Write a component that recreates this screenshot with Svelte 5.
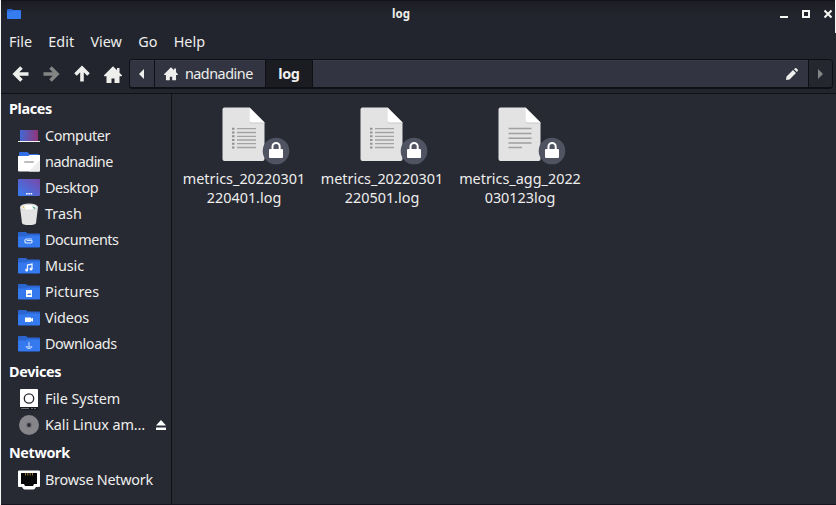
<script>
  const places = [
    { name: 'Computer', icon: 'computer', spacing: -0.4 },
    { name: 'nadnadine', icon: 'user', spacing: -0.5 },
    { name: 'Desktop', icon: 'desktop', spacing: -0.4 },
    { name: 'Trash', icon: 'trash', spacing: 0 },
    { name: 'Documents', icon: 'documents', spacing: -0.45 },
    { name: 'Music', icon: 'music', spacing: -0.1 },
    { name: 'Pictures', icon: 'pictures', spacing: 0 },
    { name: 'Videos', icon: 'videos', spacing: -0.15 },
    { name: 'Downloads', icon: 'downloads', spacing: -0.4 }
  ];
  const devices = [
    { name: 'File System', icon: 'drive', spacing: -0.05 },
    { name: 'Kali Linux am…', icon: 'disc', spacing: -0.1, eject: true }
  ];
  const network = [{ name: 'Browse Network', icon: 'network', spacing: -0.25 }];
  const groups = [
    { title: 'Places', items: places },
    { title: 'Devices', items: devices },
    { title: 'Network', items: network }
  ];
  const files = [
    { lines: ['metrics_20220301', '220401.log'], list: true },
    { lines: ['metrics_20220301', '220501.log'], list: true },
    { lines: ['metrics_agg_2022', '030123log'], list: false }
  ];
  const menus = ['File', 'Edit', 'View', 'Go', 'Help'];
</script>

{#snippet house()}
  <svg class="house" viewBox="0 0 18 17"><path d="M9 .3 0 9.300q-.2.900.7.900h1.800V17h5v-4.500h3V17h5v-6.800h1.800q.9 0 .7-.9L15.500 6.700V2h-2.500v2.300z" /></svg>
{/snippet}

{#snippet sideIcon(kind)}
  <svg class="side-icon" viewBox="0 0 22 22">
    {#if kind === 'computer'}
      <rect x="2" y="5" width="18" height="11" fill="url(#screen)" />
      <path d="M0 16.500h22" stroke="#f4f4f6" />
    {:else if kind === 'user'}
      <path d="M1 8V2.200Q1 1 2.200 1h7.500l1.500 2H20q1 0 1 1v4z" fill="#3170e4" />
      <path d="M0 5h10l2-1h10v15.500q0 1-1 1H1q-1 0-1-1z" fill="#fff" />
      <path d="M22 9v10.500q0 1-1 1H11z" fill="#ededed" />
      <path d="M7 11h8" stroke="#bdbdbd" stroke-width="2" stroke-linecap="round" />
    {:else if kind === 'desktop'}
      <rect x="0" y="2" width="22" height="17" rx="1" fill="url(#desk)" />
      <path d="M8 16.700h1.600m.7 0h1.600m.7 0h1.600" stroke="#fff" stroke-width="1.500" />
    {:else if kind === 'trash'}
      <path d="M2 4 4 20q.3 2 7 2t7-2l2-16z" fill="#e3e3e3" />
      <ellipse cx="11" cy="4" rx="9" ry="3.500" fill="#d8d8d8" />
      <ellipse cx="11" cy="4.300" rx="7.600" ry="2.500" fill="#fff" />
      <path d="m4 4 2-1 1 3z" fill="#e4c36e" /><path d="m14 3 4 2-2 1z" fill="#47a58d" />
    {:else if kind === 'drive'}
      <rect x="2" y="1" width="18" height="19" rx="1" fill="#fff" />
      <path d="M2 19h18v2q0 1-1 1H3q-1 0-1-1z" fill="#191a20" />
      <path d="M3 20.500h8m2 0h2m1 0h2" stroke="#74757a" />
      <circle cx="11" cy="10.500" r="4.700" fill="#fff" stroke="#25262c" stroke-width="1.300" />
    {:else if kind === 'disc'}
      <circle cx="11" cy="11" r="10" fill="#85858a" />
      <circle cx="11" cy="11" r="3.200" fill="#77787e" />
      <circle cx="11" cy="11" r="1.900" fill="#292a35" />
    {:else if kind === 'network'}
      <path d="M1.200 1.500h19.600q1.200 0 1.200 1.200V17q0 1-1 1h-3l-1 1.500q-.4 1-2 1H7q-1.500 0-2-1L4 18H1q-1 0-1-1V2.700Q0 1.500 1.200 1.500z" fill="#fff" />
      <path d="M3 4h16v11h-3l-1 2H7l-1-2H3z" fill="#08080a" />
      <path d="M7.500 4v2.500m2.300-2.500v2.500m2.400-2.500v2.500m2.300-2.500v2.500" stroke="#8c7539" />
    {:else}
      <path d="M0 15V4q0-1 1-1h6.500q.8 0 1.500.7l.7.800H21q1 0 1 1V15z" fill="#2a65d0" />
      <path d="M0 7.500h8l1.500-1H22V17.500q0 1-1 1H1q-1 0-1-1z" fill="#3579ef" />
      <path d="M.5 18.500h21" stroke="#2a4f9c" stroke-width=".7" />
      {#if kind === 'documents'}
        <path d="M14.800 10.800H9.500a2 2 0 0 0 0 4h3.700a1.700 1.700 0 0 0 1.700-1.700q0-.8-.9-.8H9.300" transform="translate(-.7 -.8)" fill="none" stroke="#d9e6ff" stroke-width="1.100" />
      {:else if kind === 'music'}
        <path d="M9.500 15v-5l4.500-1V14" fill="none" stroke="#eef4ff" stroke-width="1.300" />
        <circle cx="8.700" cy="15" r="1.500" fill="#eef4ff" /><circle cx="13" cy="14" r="1.500" fill="#eef4ff" />
      {:else if kind === 'pictures'}
        <rect x="8" y="9" width="6" height="7" fill="#fff" /><path d="m9 14 1.300-1.500.8.500 1-1L13.300 14z" fill="#3579ef" />
      {:else if kind === 'videos'}
        <path d="M7 10.500h6v1.300l2-1v4l-2-1V15H7z" fill="#fff" />
      {:else}
        <path d="M11 9v5.500m-1.500-1.500 1.500 1.500 1.500-1.500M8 13q.2 2.500 3 2.500T14 13" fill="none" stroke="#c9dcff" stroke-width="1" />
      {/if}
    {/if}
  </svg>
{/snippet}

<main class="window">
  <svg class="defs" width="0" height="0">
    <linearGradient id="screen" x1="0" x2="1"><stop stop-color="#4169d5" /><stop offset="1" stop-color="#913578" /></linearGradient>
    <linearGradient id="desk" x1="0" y1="1" x2="1" y2="0"><stop stop-color="#367df2" /><stop offset="1" stop-color="#7947a9" /></linearGradient>
  </svg>
  <div class="edge"></div>
  <header class="titlebar">
    <svg class="app-icon" viewBox="0 0 14 10"><path d="M0 1q0-1 1-1h4l1 1h7q1 0 1 1v7q0 1-1 1H1q-1 0-1-1z" fill="#2967d5" /><path d="M0 2.500h5l1-1h8V9q0 1-1 1H1q-1 0-1-1z" fill="#367cf1" /></svg>
    <h1>log</h1>
    <svg class="controls" viewBox="0 0 53 10"><path d="M0 8h8" stroke-width="2" /><path d="M23 2h6v6h-6z" fill="none" stroke-width="2" /><path d="m44.500 1.500 7 7m0-7-7 7" stroke-width="2" /></svg>
  </header>
  <nav class="menubar">
    {#each menus as menu}<span>{menu}</span>{/each}
  </nav>
  <div class="toolbar">
    <svg class="arrow" viewBox="0 0 16 16"><path d="M8.500 1.500 2 8l6.500 6.500M2.500 8H15.500" /></svg>
    <svg class="arrow dim" viewBox="0 0 16 16"><path d="M7.500 1.500 14 8l-6.500 6.500M13.500 8H.5" /></svg>
    <svg class="arrow" viewBox="0 0 16 16"><path d="M1.500 8.500 8 2l6.500 6.500M8 2.500V15.500" /></svg>
    <div class="go-home">{@render house()}</div>
    <div class="pathbar">
      <div class="cell prev"><svg viewBox="0 0 5 10"><path d="M5 0v10L0 5z" /></svg></div>
      <div class="cell crumb">{@render house()}<span>nadnadine</span></div>
      <div class="cell current"><span>log</span></div>
      <div class="cell rest">
        <svg viewBox="0 0 12 12"><path d="m0 12 .5-3.500L7 2l3 3-6.500 6.500zM8 1.200 9 .3q.7-.6 1.400 0l1.300 1.300q.6.7 0 1.400L10.800 4z" /></svg>
      </div>
      <div class="cell next"><svg viewBox="0 0 5 10"><path d="M0 0v10l5-5z" /></svg></div>
    </div>
  </div>
  <div class="body">
    <aside>
      {#each groups as group}
        <h2>{group.title}</h2>
        {#each group.items as item}
          <div class="place">
            {@render sideIcon(item.icon)}
            <span style:letter-spacing="{item.spacing}px">{item.name}</span>
            {#if item.eject}<svg class="eject" viewBox="0 0 10 10"><path d="M5 0 10 5.500H0zM0 7.500h10V10H0z" /></svg>{/if}
          </div>
        {/each}
      {/each}
    </aside>
    <section class="files">
      {#each files as file}
        <article>
          <svg class="doc" viewBox="0 0 70 60">
            <path d="M15 1.500h24.500L54.500 16.500v36.500q0 2-2 2h-38q-2 0-2-2V3.500q0-2 2-2z" fill="#e3e3e3" />
            <path d="M39.500 3v12.500q0 2 2 2h13z" fill="#c9c9c9" />
            <path d="M39.500 1.500v13q0 2 2 2H54.500z" fill="#fff" />
            {#if file.list}
              <path d="M27 22.700h19M27 26.500h19M27 30.300h19M27 34h19M27 37.700h19M27 41.500h19" stroke="#a3a3a3" stroke-width="1.300" />
              <path d="M22 22.700h2.500M22 26.500h2.500M22 30.300h2.500M22 34h2.500M22 37.700h2.500M22 41.500h2.500" stroke="#929292" stroke-width="2" />
            {:else}
              <path d="M22.500 22.500h23M22.500 27.500h23M22.500 32.200h23M22.500 37h23M22.500 41.500h13.500" stroke="#a0a0a0" stroke-width="1.400" />
            {/if}
            <circle cx="66" cy="45" r="13.300" fill="#505361" />
            <path d="M62.500 44.500v-4a3.600 3.600 0 0 1 7.200 0V44.500" fill="none" stroke="#fff" stroke-width="2" />
            <rect x="59" y="43" width="14" height="9" rx="1" fill="#fff" />
          </svg>
          {#each file.lines as line}<p>{line}</p>{/each}
        </article>
      {/each}
    </section>
  </div>
</main>

<style>
  :global(body) { margin: 0; background: #f4f6f8; }
  .window {
    position: relative; box-sizing: border-box; width: 835px; height: 505px; margin-left: 1px;
    display: flex; flex-direction: column; overflow: hidden;
    background: #23252e; color: #eeeeec; border-bottom: 1px solid #151620;
    font: 14.4px/20px "Noto Sans", sans-serif;
  }
  .defs { position: absolute; }
  .edge { position: absolute; top: 0; right: 0; width: 1px; height: 33px; background: #f4f6f8; }
  svg { display: block; flex: none; overflow: visible; }
  .titlebar {
    height: 28px; flex: none; box-sizing: border-box; display: flex; align-items: center; justify-content: space-between;
    padding: 0 3px 0 6px; background: linear-gradient(#0c0d12 0, #1b1c23 1px, #23252e 14px);
  }
  .app-icon { width: 14px; height: 10px; }
  h1 { margin: 0; padding-left: 1px; font-size: 11.500px; line-height: 20px; font-weight: 700; }
  .controls { width: 53px; height: 10px; stroke: #f6f6f4; }
  .menubar { height: 28px; flex: none; box-sizing: border-box; display: flex; align-items: center; gap: 16.300px; padding: 0 0 0 8px; }
  .toolbar { height: 38px; box-sizing: border-box; flex: none; display: flex; align-items: center; padding: 0 3px 1px 12px; border-bottom: 1px solid #101117; }
  .arrow { width: 16px; height: 16px; margin-right: 14.300px; fill: none; stroke: #eeeeec; stroke-width: 3.600; }
  .arrow.dim { stroke: #858585; }
  .house { width: 18px; height: 17px; fill: #eeeeec; }
  .go-home { margin-right: 7px; }
  .pathbar {
    flex: 1; height: 30px; box-sizing: border-box; display: flex; border: 1px solid #0f1016; border-bottom-width: 2px;
    border-radius: 4px; overflow: hidden;
  }
  .cell { display: flex; align-items: center; box-sizing: border-box; background: #323541; border-right: 1px solid #0f1016; box-shadow: inset 0 1px #3b3e49; }
  .cell svg { fill: #eeeeec; }
  .prev { width: 25px; justify-content: center; }
  .prev svg, .next svg { width: 5px; height: 10px; }
  .crumb { width: 111px; padding-left: 9px; gap: 7px; letter-spacing: -.5px; }
  .crumb .house, .crumb :global(.house) { width: 14px; height: 13.200px; }
  .current { width: 47px; justify-content: center; background: #1a1c22; font-weight: 700; letter-spacing: -.3px; box-shadow: none; }
  .rest { flex: 1; justify-content: flex-end; padding-right: 10px; }
  .rest svg { width: 12px; height: 12px; }
  .next { width: 23px; justify-content: center; background: #252730; border: 0; box-shadow: none; }
  .next svg { fill: #858585; }
  .body { flex: 1; display: flex; background: #272933; }
  aside { width: 170px; flex: none; border-right: 1px solid #101117; }
  h2 { margin: 0; height: 29px; padding-left: 8px; font-size: 14.400px; line-height: 29px; font-weight: 700; letter-spacing: -.35px; color: #fff; }
  .place { height: 26px; display: flex; align-items: center; padding-left: 17px; gap: 5px; }
  .place span { flex: 1; white-space: nowrap; }
  .side-icon { width: 22px; height: 22px; }
  .eject { width: 10px; height: 10px; margin-right: 5px; fill: #fff; }
  .files { flex: 1; display: flex; padding: 12px 0 0 3px; }
  article { width: 138px; flex: none; }
  .doc { width: 70px; height: 60px; margin: 0 0 3px 35px; }
  p { margin: 0; line-height: 19px; text-align: center; white-space: nowrap; }
</style>
